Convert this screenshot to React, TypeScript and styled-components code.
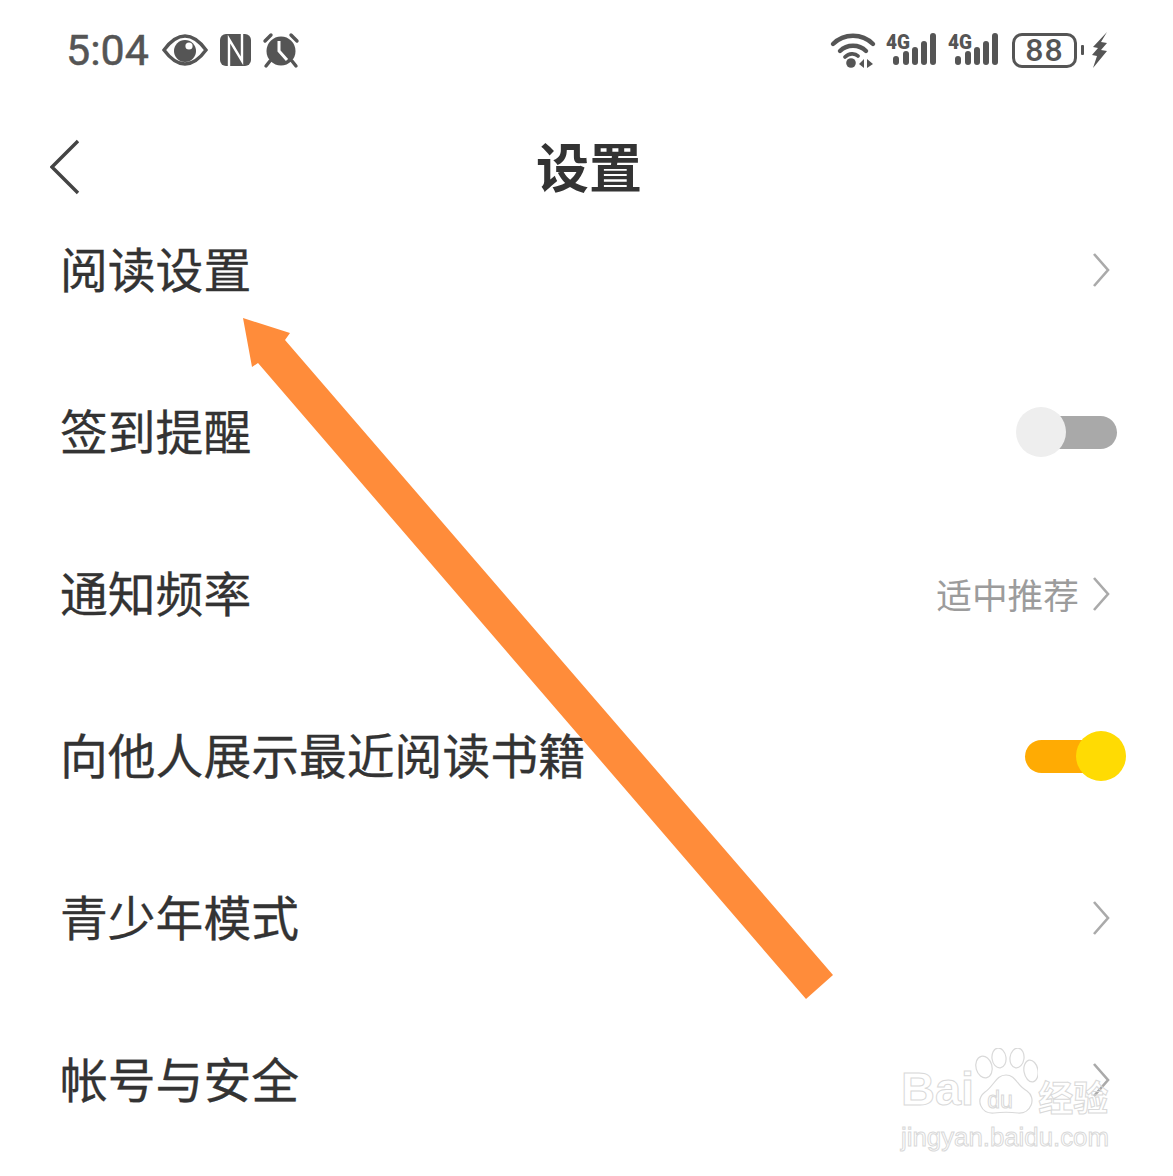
import styled, { createGlobalStyle } from "styled-components";

const GlobalStyle = createGlobalStyle`
html, body {
    margin: 0;
    padding: 0;
    background: #fff;
}
`;

const Page = styled.div`
position: relative;
width: 1173px;
height: 1176px;
overflow: hidden;
background: #fff;
font-family: "Noto Sans CJK SC", "Liberation Sans", sans-serif;
color: #333;
`;

const StatusBar = styled.div`
display: flex;
justify-content: space-between;
align-items: center;
height: 100px;
padding: 0 66px 0 66px;
color: #555;
`;

const StatusGroup = styled.div`
display: flex;
align-items: center;
`;

const Clock = styled.span`
font-family: "Roboto", "Liberation Sans", sans-serif;
font-size: 43px;
line-height: 50px;
width: 83px;
-webkit-text-stroke: 0.5px #555;
color: #555;
`;

const StatusIcon = styled.svg<{ $gap?: number }>`
display: block;
flex: none;
overflow: visible;
margin-left: ${(p) => p.$gap ?? 0}px;
`;

const SignalIcon = styled(StatusIcon)`
margin-top: -4px;
`;

const BatteryBox = styled.div`
display: flex;
align-items: center;
justify-content: center;
width: 65px;
height: 35px;
box-sizing: border-box;
margin-left: 14px;
border: 3px solid #555;
border-radius: 10px;
font-family: "Roboto", "Liberation Sans", sans-serif;
font-size: 32px;
font-weight: 500;
letter-spacing: 1px;
color: #555;
`;

const BatteryNib = styled.div`
width: 3px;
height: 10px;
margin-left: 4px;
border-radius: 1px;
background: #555;
`;

const NavBar = styled.div`
display: grid;
grid-template-columns: 1fr auto 1fr;
grid-template-rows: 44px;
align-items: center;
height: 44px;
margin-top: 45px;
padding: 0 45px 0 50px;
`;

const BackIcon = styled.svg`
display: block;
`;

const Title = styled.div`
font-size: 53px;
font-weight: 700;
line-height: 44px;
margin-bottom: 5px;
color: #333;
`;

const RowList = styled.div`
display: flex;
flex-direction: column;
`;

const Row = styled.div`
display: flex;
align-items: center;
justify-content: space-between;
height: 162px;
padding: 0 56px 0 60px;
`;

const RowLabel = styled.span`
margin-bottom: 5px;
font-size: 47.8px;
line-height: 60px;
-webkit-text-stroke: 0.3px #333;
color: #333;
`;

const RowRight = styled.div`
display: flex;
align-items: center;
margin-right: 7px;
`;

const RowValue = styled.span`
margin-right: 13px;
font-size: 35.7px;
line-height: 44px;
color: #9c9c9c;
`;

const ChevronIcon = styled.svg`
display: block;
`;

const Toggle = styled.div<{ $on?: boolean }>`
position: relative;
display: flex;
align-items: center;
justify-content: ${(p) => (p.$on ? "flex-start" : "flex-end")};
width: 101px;
height: 50px;
margin-right: ${(p) => (p.$on ? "-9px" : "0")};
`;

const ToggleTrack = styled.div<{ $on?: boolean }>`
width: 77px;
height: 33px;
border-radius: 17px;
background: ${(p) => (p.$on ? "#ffab03" : "#a9a9a9")};
`;

const ToggleKnob = styled.div<{ $on?: boolean }>`
position: absolute;
top: 0;
left: ${(p) => (p.$on ? "51px" : "0")};
width: 50px;
height: 50px;
border-radius: 50%;
background: ${(p) => (p.$on ? "#ffdb03" : "#eeeeee")};
`;

const ArrowOverlay = styled.svg`
position: absolute;
top: 0;
left: 0;
pointer-events: none;
`;

const Watermark = styled.div`
position: absolute;
top: 1048px;
left: 901px;
width: 212px;
color: transparent;
-webkit-text-stroke: 1px #d9d9d9;
`;

const MarkLogo = styled.div`
display: flex;
align-items: flex-end;
height: 70px;
`;

const MarkBai = styled.span`
font-family: "Liberation Sans", sans-serif;
font-size: 47px;
font-weight: 700;
line-height: 60px;
margin-bottom: -1px;
`;

const MarkPaw = styled.div`
position: relative;
width: 64px;
height: 70px;
flex: none;
`;

const MarkDu = styled.span`
position: absolute;
left: 13px;
bottom: 5px;
font-family: "Liberation Sans", sans-serif;
font-size: 23px;
line-height: 26px;
`;

const MarkCn = styled.span`
font-size: 35px;
font-weight: 700;
line-height: 44px;
white-space: nowrap;
`;

const MarkUrl = styled.div`
margin-top: 3px;
font-family: "Liberation Sans", sans-serif;
font-size: 25.8px;
line-height: 32px;
white-space: nowrap;
`;

function Chevron() {
    return (
        <ChevronIcon width="18" height="36" viewBox="0 0 18 36" fill="none">
            <path d="M2 2 L16 18 L2 34" stroke="#aaaaaa" strokeWidth="2.6" />
        </ChevronIcon>
    );
}

function Signal({ gap }: { gap: number }) {
    return (
        <SignalIcon $gap={gap} width="50" height="40" viewBox="0 -4 50 40" fill="#555">
            <text x="0" y="17" fontFamily="Roboto, sans-serif" fontSize="20" fontWeight="900" textLength="24" lengthAdjust="spacingAndGlyphs">4G</text>
            <rect x="7" y="24" width="6" height="9" rx="3" />
            <rect x="17" y="19" width="6" height="14" rx="3" />
            <rect x="26" y="15" width="6" height="18" rx="3" />
            <rect x="35" y="9" width="6" height="24" rx="3" />
            <rect x="44" y="1" width="6" height="32" rx="3" />
        </SignalIcon>
    );
}

export default function App() {
    return (
        <Page>
            <GlobalStyle />
            <StatusBar>
                <StatusGroup>
                    <Clock>5:04</Clock>
                    <StatusIcon $gap={13} width="46" height="32" viewBox="0 0 46 32" fill="none">
                        <path d="M2 16 C10 5 17 2 23 2 C29 2 36 5 44 16 C36 27 29 30 23 30 C17 30 10 27 2 16 Z" stroke="#555" strokeWidth="3.4" />
                        <circle cx="23" cy="17" r="11" fill="#555" />
                        <circle cx="27" cy="12" r="3.6" fill="#fff" />
                    </StatusIcon>
                    <StatusIcon $gap={12} width="31" height="32" viewBox="0 0 31 32">
                        <rect x="0" y="0" width="31" height="32" rx="6" fill="#555" />
                        <path d="M9 32 V5 L21 25 M22 0 V27 L10 7" stroke="#fff" strokeWidth="2.4" fill="none" />
                    </StatusIcon>
                    <StatusIcon $gap={12} width="36" height="34" viewBox="0 0 36 34">
                        <circle cx="18" cy="18" r="14.5" fill="#555" />
                        <path d="M2 8 L8 2 M28 2 L34 8 M7 28 L3 33 M29 28 L33 33" stroke="#555" strokeWidth="3.4" strokeLinecap="round" />
                        <path d="M16 8 V18 L24 27" stroke="#fff" strokeWidth="3" fill="none" />
                    </StatusIcon>
                </StatusGroup>
                <StatusGroup>
                    <StatusIcon width="44" height="35" viewBox="0 0 44 35" fill="none">
                        <path d="M2 11 C13 0 31 0 42 11" stroke="#555" strokeWidth="4.4" strokeLinecap="round" />
                        <path d="M9 18 C16 11 28 11 35 18" stroke="#555" strokeWidth="4.4" strokeLinecap="round" />
                        <path d="M14 24 C18 20 24 20 27 23" stroke="#555" strokeWidth="3.8" strokeLinecap="round" />
                        <circle cx="20" cy="30" r="4.8" fill="#555" />
                        <path d="M33 26 V35 L28 31 Z M36 26 V35 L42 31 Z" fill="#555" />
                    </StatusIcon>
                    <Signal gap={11} />
                    <Signal gap={12} />
                    <BatteryBox>88</BatteryBox>
                    <BatteryNib />
                    <StatusIcon $gap={8} width="15" height="36" viewBox="0 0 15 36" fill="#555">
                        <path d="M15 0 L1 15 L6 16 L0 23 L5 24 L1 36 L15 19 L9 18 L15 11 L9 10 Z" />
                    </StatusIcon>
                </StatusGroup>
            </StatusBar>

            <NavBar>
                <BackIcon width="30" height="56" viewBox="0 0 30 56" fill="none">
                    <path d="M28 2 L2 28 L28 54" stroke="#444" strokeWidth="3.4" />
                </BackIcon>
                <Title>设置</Title>
                <span />
            </NavBar>

            <RowList>
                <Row>
                    <RowLabel>阅读设置</RowLabel>
                    <RowRight><Chevron /></RowRight>
                </Row>
                <Row>
                    <RowLabel>签到提醒</RowLabel>
                    <Toggle>
                        <ToggleTrack />
                        <ToggleKnob />
                    </Toggle>
                </Row>
                <Row>
                    <RowLabel>通知频率</RowLabel>
                    <RowRight>
                        <RowValue>适中推荐</RowValue>
                        <Chevron />
                    </RowRight>
                </Row>
                <Row>
                    <RowLabel>向他人展示最近阅读书籍</RowLabel>
                    <Toggle $on>
                        <ToggleTrack $on />
                        <ToggleKnob $on />
                    </Toggle>
                </Row>
                <Row>
                    <RowLabel>青少年模式</RowLabel>
                    <RowRight><Chevron /></RowRight>
                </Row>
                <Row>
                    <RowLabel>帐号与安全</RowLabel>
                    <RowRight><Chevron /></RowRight>
                </Row>
            </RowList>

            <ArrowOverlay width="1173" height="1176" viewBox="0 0 1173 1176">
                <path d="M243 318 L290 333 L285 340 L833 975 L806 999 L258 363 L252 367 Z" fill="#ff8c3a" />
            </ArrowOverlay>

            <Watermark>
                <MarkLogo>
                    <MarkBai>Bai</MarkBai>
                    <MarkPaw>
                        <svg width="64" height="70" viewBox="0 0 64 70" fill="#fff" stroke="#d9d9d9" strokeWidth="1.2">
                            <ellipse cx="10" cy="19" rx="8" ry="11" transform="rotate(-15 10 19)" />
                            <ellipse cx="25" cy="10" rx="7" ry="10" transform="rotate(-8 25 10)" />
                            <ellipse cx="43" cy="10" rx="7" ry="10" transform="rotate(8 43 10)" />
                            <ellipse cx="57" cy="23" rx="7" ry="11" transform="rotate(-10 57 23)" />
                            <path d="M32 27 C42 27 43 38 53 43 C63 50 57 66 44 65 C36 64 28 64 20 65 C7 66 1 52 11 44 C20 38 22 27 32 27 Z" />
                        </svg>
                        <MarkDu>du</MarkDu>
                    </MarkPaw>
                    <MarkCn>经验</MarkCn>
                </MarkLogo>
                <MarkUrl>jingyan.baidu.com</MarkUrl>
            </Watermark>
        </Page>
    );
}
